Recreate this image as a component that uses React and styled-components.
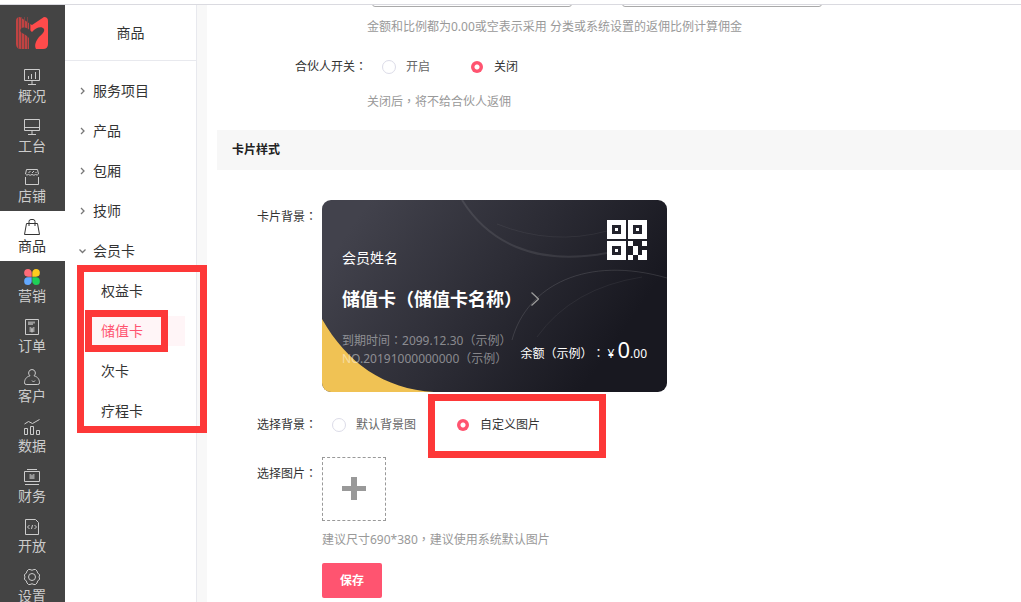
import React, { useState } from "react";
import styled, { createGlobalStyle, css } from "styled-components";

const GlobalStyle = createGlobalStyle`
  *, *::before, *::after { box-sizing: border-box; }
  body {
    margin: 0;
    background: #fff;
    color: #333;
    font: 12px/20px "Noto Sans", "Noto Sans CJK SC", sans-serif;
    text-spacing-trim: space-all;
  }
  button, input { font: inherit; }
`;

const RED = "#fd3838";
const PINK = "#ff5470";

const Page = styled.div`
  display: flex;
  flex-direction: column;
  height: 100vh;
  overflow: hidden;
`;

const TopEdge = styled.div`
  flex: none;
  height: 5px;
  border-bottom: 1px solid #dadae0;
`;

const Shell = styled.div`
  display: flex;
  flex: 1;
  min-height: 0;
`;

const Sidebar = styled.nav`
  flex: none;
  width: 65px;
  background: #444;
  overflow: hidden;
`;

const LogoLink = styled.a`
  display: flex;
  padding: 12px 16px;
`;

const NavLink = styled.a`
  display: flex;
  flex-direction: column;
  align-items: center;
  gap: 1px;
  height: 50px;
  padding: 8px 1px 0 0;
  font-size: 14px;
  text-decoration: none;
  color: ${(p) => (p.$active ? "#333" : "#ccc")};
  background: ${(p) => (p.$active ? "#fff" : "transparent")};
`;

const Panel = styled.aside`
  flex: none;
  width: 132px;
  border-right: 1px solid #e8e9ee;
`;

const PanelTitle = styled.h1`
  margin: 0 0 10px;
  height: 56px;
  border-bottom: 1px solid #e8e9ee;
  font-size: 14px;
  font-weight: 400;
  line-height: 55px;
  text-align: center;
`;

const TreeButton = styled.button`
  display: flex;
  align-items: center;
  gap: 8px;
  width: 100%;
  height: 40px;
  padding: 0 0 0 15px;
  border: 0;
  background: none;
  color: #333;
  font-size: 14px;
  text-align: left;
`;

const SubList = styled.div`
  position: relative;
  display: flex;
  flex-direction: column;
  gap: 10px;
  padding: 5px 11px 5px 27px;
`;

const SubLink = styled.a`
  padding-left: 9px;
  font-size: 14px;
  line-height: 30px;
  text-decoration: none;
  color: ${(p) => (p.$active ? PINK : "#333")};
  background: ${(p) => (p.$active ? "#fff5f7" : "transparent")};
`;

const Highlight = styled.div`
  position: absolute;
  border: 7px solid ${RED};
  pointer-events: none;
  ${(p) => p.$area}
`;

const groupArea = css`inset: -6px -11px -2px 12px;`;
const itemArea = css`top: 39px; left: 20px; width: 83px; height: 42px;`;
const optionArea = css`inset: -21px -66px -23px -28px;`;

const Gutter = styled.div`
  flex: none;
  width: 10px;
  background: #f8f8f8;
`;

const Main = styled.main`
  flex: 1;
  min-width: 0;
  padding-left: 10px;
`;

const Row = styled.div`
  display: flex;
  margin-top: ${(p) => p.$top || 0}px;
`;

const Label = styled.div`
  flex: none;
  width: ${(p) => (p.$wide ? 150 : 100)}px;
  margin-right: ${(p) => (p.$wide ? 0 : 5)}px;
  padding-top: ${(p) => (p.$drop ? 7 : 0)}px;
  text-align: right;
`;

/* Full-width punctuation centred in its cell. */
const Mark = styled.span`
  font-family: "Noto Sans CJK TC", sans-serif;
  line-height: 0;
`;

const ScrolledInputs = styled.div`
  display: flex;
  align-items: flex-end;
  gap: 50px;
  height: 2px;
  padding-left: 155px;
  overflow: hidden;
`;

const TextInput = styled.input`
  flex: none;
  width: 200px;
  height: 32px;
  border: 1px solid #aaa;
  border-radius: 3px;
`;

const Hint = styled.p`
  margin: ${(p) => p.$top}px 0 0;
  padding-left: ${(p) => (p.$wide ? 150 : 0)}px;
  color: #999;
`;

const Options = styled.div`
  display: flex;
  gap: 40px;
  padding-left: ${(p) => (p.$wide ? 15 : 10)}px;
`;

const Option = styled.label`
  position: relative;
  display: flex;
  align-items: center;
  gap: 10px;
  color: #666;
  &:has(input:checked) { color: #333; }
`;

const RadioInput = styled.input`
  appearance: none;
  width: 14px;
  height: 14px;
  margin: 0;
  border: 1px solid #dcdce8;
  border-radius: 50%;
  background: #fff;
  &:checked {
    border-color: transparent;
    background: radial-gradient(circle, #fff 0 2px, ${PINK} 3px) padding-box;
  }
`;

const SectionTitle = styled.h2`
  margin: 18px 0 0;
  padding-left: 15px;
  background: #f7f7f7;
  color: #222;
  font-size: 12px;
  font-weight: 700;
  line-height: 40px;
`;

const Card = styled.div`
  position: relative;
  width: 345px;
  height: 192px;
  padding: 20px;
  border-radius: 9px;
  overflow: hidden;
  color: #fff;
  background: linear-gradient(125deg, #42424c 10%, #2b2b34 50%, #181820 82%);
`;

const CardArt = styled.svg`
  position: absolute;
  inset: 0;
`;

const CardBody = styled.div`
  position: relative;
  display: flex;
  flex-direction: column;
  height: 100%;
`;

const CardTop = styled.div`
  display: flex;
  justify-content: space-between;
  height: 65px;
`;

const Member = styled.div`
  padding-top: 28px;
  font-size: 14px;
`;

const CardName = styled.div`
  display: flex;
  align-items: center;
  gap: 9px;
  font-size: 18px;
  font-weight: 700;
  line-height: 28px;
`;

const CardFoot = styled.div`
  display: flex;
  justify-content: space-between;
  padding-top: 19px;
  white-space: nowrap;
`;

const CardMeta = styled.div`
  color: rgba(255, 255, 255, 0.45);
  line-height: 18px;
`;

const Balance = styled.div`
  padding-top: 7px;
`;

const Currency = styled.span`
  margin: 0 3px;
`;

const BalanceWhole = styled.span`
  font-size: 22px;
`;

const UploadButton = styled.button`
  display: flex;
  align-items: center;
  justify-content: center;
  width: 64px;
  height: 64px;
  padding: 0;
  border: 1px dashed #999;
  background: #fff;
`;

const SaveButton = styled.button`
  width: 60px;
  height: 35px;
  margin-top: 13px;
  padding: 0;
  border: 0;
  border-radius: 2px;
  background: ${PINK};
  color: #fff;
  font-weight: 700;
`;

const Logo = () => (
  <svg width="32" height="32" viewBox="0 0 32 32" aria-hidden="true">
    <path d="M15 7.500L4 0Q0 0 0 4V27Q0 32 5 32H15z" fill="#c04342" />
    <path d="M2.500 0V32M5.500 0V32M8.500 0V32M11.500 0V32" stroke="#7a4343" />
    <path d="M13.500 5V32" stroke="#444" />
    <path d="M15 7.500L16 8 28 0Q32 0 32 4V27Q32 32 27 32H15z" fill="#ff4b4b" />
    <path d="M16 15C13 12 10 10 7 10.500C4 11.500 3.500 14.500 6 16C10 18 14 20 14 25C14 28 13 30 13 32H20C18 28 20 24 23 20C26 17 29 15 28 12C26 9 20 10 16 15Z" fill="#444" />
  </svg>
);

const Icon = ({ children }) => (
  <svg width="16" height="16" viewBox="0 0 16 16" fill="none" stroke="currentColor" aria-hidden="true">
    {children}
  </svg>
);

const icons = {
  overview: <path d="M.5.500h15v11H.500zM8 12v3M4 15.500h8M4.500 7v3M7.500 5v5M11.500 3v7" />,
  desk: <path d="M.5.500h15v11H.500zM.500 8.500h15M8 12v3M4 15.500h8" />,
  shop: <path d="M2.500.500h11l1 4.500q-1.300 2-2.800.500-1.800 1.500-3.700 0-1.900 1.500-3.700 0Q2.800 7 1.500 5zM1.500 8v7.500h13V8M4.500 4l2-2M8 4l2-2M11.500 4l1-1" />,
  goods: <path d="M2.500 4.500h11l2 11H.500zM5 7V2.500Q5 .500 7 .500h2q2 0 2 2V7" />,
  market: (
    <g stroke="none">
      <path d="M4 0a3.700 3.700 0 0 1 3.700 4v3.700H4A3.800 3.800 0 0 1 4 0z" fill="#ff6b78" />
      <path d="M12 0a3.700 3.700 0 0 0-3.700 4v3.700H12A3.800 3.800 0 0 0 12 0z" fill="#ffcb1f" />
      <path d="M4 16a3.700 3.700 0 0 0 3.700-4V8.300H4A3.800 3.800 0 0 0 4 16z" fill="#62a8ff" />
      <path d="M12 16a3.700 3.700 0 0 1-3.700-4V8.300H12A3.800 3.800 0 0 1 12 16z" fill="#1fcf57" />
    </g>
  ),
  order: (
    <>
      <path d="M1.500.500h13v15h-13z" />
      <path d="M4 2.500h7v2H9V6H4zM5.500 8h1.500l1 1.500L9 8h1.500v5h-5z" fill="#999" stroke="none" />
      <path d="M8 9.500v4" />
    </>
  ),
  client: <path d="M8 .500a3.500 3.500 0 0 1 2 6.300c4 1 5.500 4 5.500 7q0 1.700-1.700 1.700H2.200Q.500 15.500.500 13.800c0-3 1.500-6 5.500-7A3.500 3.500 0 0 1 8 .500M8 11.500l1.500 1.500 1.500-1.500" />,
  data: <path d="M.5 5l4-2.500 4 2L15.500.500M.500 9.500h3v6h-3zM6.500 7.500h3v8h-3zM12.500 11.500h3v4h-3z" />,
  finance: (
    <>
      <path d="M3 .500h10M.5 2.500h15v10H.500zM1 15.500h14" />
      <path d="M5.500 5H7l1 1.500L9 5h1.500v5h-5z" fill="#999" stroke="none" />
    </>
  ),
  open: <path d="M1.500.500h10l3 3v12h-13zM5.500 6l-2 2 2 2M10.500 6l2 2-2 2M8.500 6l-1 4" />,
  settings: (
    <>
      <path d="M4.500 .500h1.500q2 1.500 4 0h1.500l1.500 1.500q0 2.500 2.500 3.500v1.500q-1.200 1 0 2v1.500q-2.500 1-2.500 3.500L11.500 15.500H10q-2-1.500-4 0H4.500L3 14q0-2.500-2.500-3.500V9q1.200-1 0-2V5.500Q3 4.500 3 2z" />
      <circle cx="8" cy="8" r="3.500" />
    </>
  ),
};

const NAV = [
  ["overview", "概况"],
  ["desk", "工台"],
  ["shop", "店铺"],
  ["goods", "商品"],
  ["market", "营销"],
  ["order", "订单"],
  ["client", "客户"],
  ["data", "数据"],
  ["finance", "财务"],
  ["open", "开放"],
  ["settings", "设置"],
];

const GROUPS = ["服务项目", "产品", "包厢", "技师", "会员卡"];
const CARD_TYPES = ["权益卡", "储值卡", "次卡", "疗程卡"];

const Chevron = ({ open }) => (
  <svg width="5" height="8" viewBox="0 0 5 8" fill="none" stroke="#777" strokeWidth="1.300" overflow="visible" aria-hidden="true">
    <path d={open ? "M-.5 2.500l3 3 3-3" : "M1 1l3 3-3 3"} />
  </svg>
);

const QrCode = () => (
  <svg width="40" height="40" viewBox="0 0 40 40" aria-hidden="true">
    <path d="M0 0h19v19H0zM21 0h19v19H21zM0 21h19v19H0zM21 21h5v5h-5zM35 21h5v5h-5zM26 26h5v9h-5zM35 30h5v5h-5zM21 35h5v5h-5zM31 35h9v5h-9z" fill="#fff" />
    <path d="M6.500 6.500h6v6h-6zM27.500 6.500h6v6h-6zM6.500 27.500h6v6h-6z" fill="none" stroke="#22222b" strokeWidth="3" />
  </svg>
);

const CardBackdrop = () => (
  <CardArt width="345" height="192" viewBox="0 0 345 192" fill="none" aria-hidden="true">
    <path d="M0 119C25 163 62 189 112 192H0z" fill="#f0c254" />
    <path d="M140 0C165 40 210 67 285 53" stroke="#fff" strokeOpacity=".09" strokeWidth="2" />
    <path d="M175 24Q230 46 285 31" stroke="#fff" strokeOpacity=".06" />
    <path d="M190 140C205 85 265 55 345 78" stroke="#fff" strokeOpacity=".12" />
    <path d="M215 137Q250 88 320 77" stroke="#fff" strokeOpacity=".06" />
  </CardArt>
);

function Radio({ name, value, current, onChange, children, marked }) {
  return (
    <Option>
      <RadioInput type="radio" name={name} checked={current === value} onChange={() => onChange(value)} />
      {children}
      {marked && <Highlight $area={optionArea} />}
    </Option>
  );
}

export default function App() {
  const [partner, setPartner] = useState("off");
  const [background, setBackground] = useState("custom");

  return (
    <Page>
      <GlobalStyle />
      <TopEdge />
      <Shell>
        <Sidebar>
          <LogoLink href="#" aria-label="首页"><Logo /></LogoLink>
          {NAV.map(([key, text]) => (
            <NavLink key={key} href="#" $active={key === "goods"}>
              <Icon>{icons[key]}</Icon>
              {text}
            </NavLink>
          ))}
        </Sidebar>
        <Panel>
          <PanelTitle>商品</PanelTitle>
          {GROUPS.map((text, i) => (
            <TreeButton key={text} type="button">
              <Chevron open={i === GROUPS.length - 1} />
              {text}
            </TreeButton>
          ))}
          <SubList>
            {CARD_TYPES.map((text) => (
              <SubLink key={text} href="#" $active={text === "储值卡"}>{text}</SubLink>
            ))}
            <Highlight $area={groupArea} />
            <Highlight $area={itemArea} />
          </SubList>
        </Panel>
        <Gutter />
        <Main>
          <ScrolledInputs>
            <TextInput aria-label="金额" />
            <TextInput aria-label="比例" />
          </ScrolledInputs>
          <Hint $wide $top={10}>金额和比例都为0.00或空表示采用 分类或系统设置的返佣比例计算佣金</Hint>
          <Row $top={20}>
            <Label $wide>合伙人开关<Mark>：</Mark></Label>
            <Options $wide role="radiogroup" aria-label="合伙人开关">
              <Radio name="partner" value="on" current={partner} onChange={setPartner}>开启</Radio>
              <Radio name="partner" value="off" current={partner} onChange={setPartner}>关闭</Radio>
            </Options>
          </Row>
          <Hint $wide $top={15}>关闭后<Mark>，</Mark>将不给合伙人返佣</Hint>

          <SectionTitle>卡片样式</SectionTitle>

          <Row $top={30}>
            <Label $drop>卡片背景<Mark>：</Mark></Label>
            <Card>
              <CardBackdrop />
              <CardBody>
                <CardTop>
                  <Member>会员姓名</Member>
                  <QrCode />
                </CardTop>
                <CardName>
                  储值卡（储值卡名称）
                  <svg width="8" height="14" viewBox="0 0 8 14" fill="none" stroke="#999" strokeWidth="1.300" aria-hidden="true">
                    <path d="M.5.500L7.500 7l-7 6.500" />
                  </svg>
                </CardName>
                <CardFoot>
                  <CardMeta>
                    到期时间<Mark>：</Mark>2099.12.30（示例）<br />
                    NO.20191000000000（示例）
                  </CardMeta>
                  <Balance>
                    余额（示例）<Mark>：</Mark><Currency>¥</Currency><BalanceWhole>0</BalanceWhole>.00
                  </Balance>
                </CardFoot>
              </CardBody>
            </Card>
          </Row>

          <Row $top={23}>
            <Label>选择背景<Mark>：</Mark></Label>
            <Options role="radiogroup" aria-label="选择背景">
              <Radio name="background" value="default" current={background} onChange={setBackground}>默认背景图</Radio>
              <Radio name="background" value="custom" current={background} onChange={setBackground} marked>自定义图片</Radio>
            </Options>
          </Row>

          <Row $top={22}>
            <Label $drop>选择图片<Mark>：</Mark></Label>
            <div>
              <UploadButton type="button" aria-label="选择图片">
                <svg width="24" height="24" viewBox="0 0 24 24" aria-hidden="true">
                  <path d="M9 0h6v9h9v5h-9v9H9v-9H0V9h9z" fill="#999" />
                </svg>
              </UploadButton>
              <Hint $top={9}>建议尺寸690*380<Mark>，</Mark>建议使用系统默认图片</Hint>
              <SaveButton type="button">保存</SaveButton>
            </div>
          </Row>
        </Main>
      </Shell>
    </Page>
  );
}
